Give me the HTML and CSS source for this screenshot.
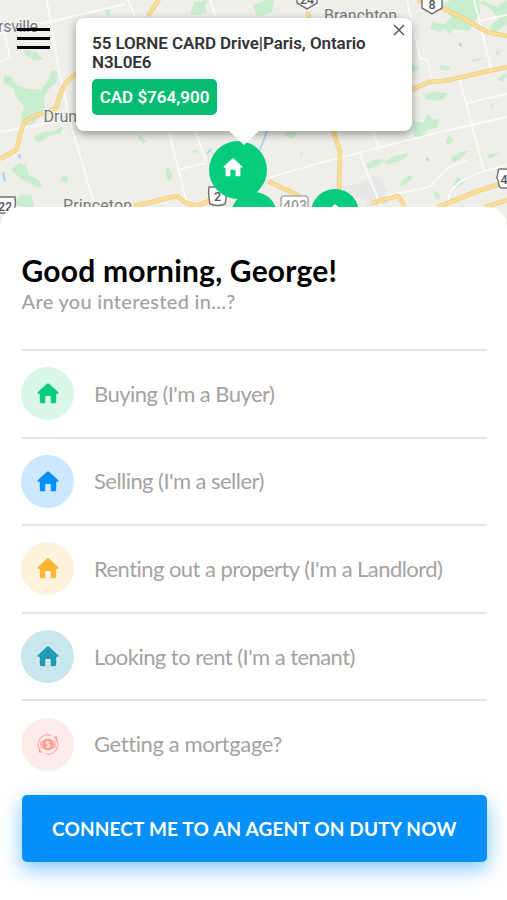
FILE: index.html
```html
<!DOCTYPE html>
<html lang="en">
<head>
<meta charset="utf-8">
<meta name="viewport" content="width=device-width, initial-scale=1">
<title>Property assistant</title>
<link rel="stylesheet" href="styles.css">
</head>
<body>
<svg class="defs" aria-hidden="true">
  <symbol id="house" viewBox="0 0 22 21"><path d="M10 .8a1.500 1.500 0 0 1 2 0l9 8.200c.9.8.5 1.700-.7 1.700h-1.100v8.100c0 .9-.5 1.400-1.400 1.400h-4v-5.800c0-1-.4-1.500-1.300-1.500H9.500c-.9 0-1.300.5-1.300 1.500v5.800H4.200c-.9 0-1.400-.5-1.400-1.400v-8.100H1.700C.5 10.700.1 9.800 1 9Z" fill="currentColor"/></symbol>
</svg>
<main class="screen">
  <header class="map">
    <svg class="map-art" viewBox="0 0 507 228" width="507" height="228">
      <rect width="507" height="228" fill="#efeee9"/>
      <g fill="#c9edcf">
        <path d="M4 75l7 2 7 9 10 3 14 0 6-9 4-10 5 2 0 10-9 8-4 9 1 13-8 7-7 8-9-4 1-9 2-8-7-7-3-10-10-6z"/>
        <path d="M24 50l13 2 6 8-8 0-10-5zM34 137l9-5 11-1 9-4-2 6-11 2-6 5-8 2zM11 170l8-7 7 2 3 10 10 5 3 8-6-2-9-4-9-6zM20 195l11-1 3 11 0 4-13-3-9-2zM60 180l4-5 4 2-1 6zM139 134l8 8-4 1-5-4zM167 166l6 8-4 8-3-6zM190 152l8-3-1 4z"/>
        <path d="M190 15l4-13 14-2-3 6 2 7-10 2zM104 10l7-4-2 12zM253 5l12-5 9 0-2 12-15 5zM440 5l11-5 28 0 1 13-11 18-15-2-5 5-5-8 7-9-7-7zM346 19l8 1 8 9-6 4-8-6zM482 0l15 7 10-7 0 24-15 11-2-9 8-7-7-10-11-6zM432 22l17 3-9 7-10-3z"/>
        <path d="M412 65l9 2-6 5-5-3zM440 65l10 1-2 5-8-2zM468 61l17-4-7 4zM495 52l7-2-5 5zM425 95l8-3 15 1-4 6-8 2-10-2zM413 120l10 3 5-9 4 5 8 1-4 8-9 2-5 7-8 0zM446 140l4-5 4 6-7 4zM497 80l10-8-4 10zM490 106l4-4-1 7zM451 158l7-5 12-3-8 7-8 6zM366 164l10-5 10 1-8 6-10 3zM386 161l7-5 16-3-4 6-12 4-8 1zM402 180l8-5 3 3-8 7-6 1zM452 185l6-8 7 5-7 5zM433 191l8 3-2 6-5-3zM300 155l3-5-1 8zM285 132l12 0-4 7-8-3zM487 155l13-3-10 7z"/>
      </g>
      <g fill="#e7e7e7"><path d="M343 187l20-5 12-7 13 16-20 9-21-4zM367 192l18-3 3 14-23 4z"/></g>
      <g fill="none" stroke="#fbfaf8" stroke-width="1.8">
        <path d="M0 33l70-16 56-13M47 0l11 65 13 60 24 82M0 62l10-4-6-29M0 132l54-10M128 0l7 17M210 0l28 80M169 132l19 75M195 130l11 31M181 169l25-6M268 178l55-16 122-31 62-14M373 131l6 18M360 154l21 53M407 0l13 58 8 2 3 18M460 80l24 91M474 0l18 72M478 21l29-6M467 103l40-9M386 196l44-9M448 204l2-13 10-9 18-9 29-8M430 187l19-20 18-7"/>
      </g>
      <g fill="none" stroke="#edcf8b" stroke-width="4.6" stroke-linejoin="round">
        <path d="M0 159l16-9 7-25q3-8 22-12l11-5 4-13q6-17 18-22M148 16l13-20M134 206l43-10 9 7 10 3 16-6M308 12l3 18M333 130l7 22-1 39M268 181l25 12 15 8M371 203l27-7 7 10M411 90l18-8 15-1 63-14M418 0l26 9 19 9 24 14 20 4M438 207l40-16 29-9M485 207l22-7"/>
      </g>
      <g fill="none" stroke="#fadf93" stroke-width="3" stroke-linejoin="round">
        <path d="M0 159l16-9 7-25q3-8 22-12l11-5 4-13q6-17 18-22M148 16l13-20M134 206l43-10 9 7 10 3 16-6M308 12l3 18M333 130l7 22-1 39M268 181l25 12 15 8M371 203l27-7 7 10M411 90l18-8 15-1 63-14M418 0l26 9 19 9 24 14 20 4M438 207l40-16 29-9M485 207l22-7"/>
      </g>
      <path d="M267 131l-7 19M3 172l2 10M19 154l1 5M460 43l1 4M427 158l1 3M207 154l4-5" fill="none" stroke="#a9d5f2" stroke-width="2"/>
      <g class="place">
        <text x="-2" y="32" textLength="40">rsville</text>
        <text x="43.500" y="122">Drumbo</text>
        <text x="63" y="211" textLength="69">Princeton</text>
        <text x="324" y="21" textLength="73">Branchton</text>
      </g>
      <g fill="#fff" stroke="#77777b" stroke-width="1.500">
        <path d="M209 187h17q1 9-1 17-7 3-15 0-2-9-1-17zM-5 197h20q1 8-1 16H-5zM297-8h20v11l-10 6-10-6zM422-5h20v13l-10 6-10-6zM507 169h-7q-2 0-2 3l-1 6q2 4 2 8l2 2h6"/>
        <rect x="281" y="196" width="27" height="18" rx="3" stroke="#aaa"/>
      </g>
      <g class="route">
        <text x="217.500" y="201">2</text><text x="5" y="211">22</text><text x="307" y="4">24</text><text x="432" y="9">8</text><text x="504" y="184">4</text><text x="295" y="211" class="soft">403</text>
      </g>
      <g fill="#06cc7d"><circle cx="238" cy="170" r="29"/><circle cx="254" cy="215" r="23"/><circle cx="335" cy="213" r="24"/></g>
      <g color="#fff"><use href="#house" x="223" y="158" width="20" height="19"/><use href="#house" x="325" y="204" width="20" height="19"/></g>
    </svg>
    <button class="menu" aria-label="Menu"><span></span><span></span><span></span></button>
    <section class="popup">
      <h2>55 LORNE CARD Drive|Paris, Ontario<br>N3L0E6</h2>
      <span class="price">CAD $764,900</span>
      <button class="close" aria-label="Close"><svg width="12" height="12" viewBox="0 0 12 12"><path d="M1 1l10 10M11 1L1 11" stroke="#555" stroke-width="1.500"/></svg></button>
    </section>
  </header>
  <section class="panel">
    <h1>Good morning, George!</h1>
    <p class="question">Are you interested in...?</p>
    <ul class="options">
      <li class="green"><span class="badge"><svg><use href="#house"/></svg></span><span class="label">Buying (I'm a Buyer)</span></li>
      <li class="blue"><span class="badge"><svg><use href="#house"/></svg></span><span class="label">Selling (I'm a seller)</span></li>
      <li class="amber"><span class="badge"><svg><use href="#house"/></svg></span><span class="label">Renting out a property (I'm a Landlord)</span></li>
      <li class="teal"><span class="badge"><svg><use href="#house"/></svg></span><span class="label">Looking to rent (I'm a tenant)</span></li>
      <li class="coral"><span class="badge"><svg viewBox="0 0 22 22"><circle cx="11" cy="11" r="6.300" fill="currentColor"/><path d="M2.900 17.200A10 10 0 0 1 14.500 1.700M19.100 4.800A10 10 0 0 1 7.500 20.300M4.900 15.500a7.800 7.800 0 0 1 0-9M17.100 6.500a7.800 7.800 0 0 1 0 9" fill="none" stroke="currentColor" stroke-width="1.100"/><path d="M16.500 2.500h4v4zM5.500 19.500h-4v-4z" fill="currentColor"/><path d="M13 8.800c-1-1-3.900-1-3.900.7 0 1.800 4 .9 4 2.900 0 1.700-3.100 1.700-4.200.6M11 7v8" fill="none" stroke="#ffebe9" stroke-width="1.100"/></svg></span><span class="label mortgage">Getting a mortgage?</span></li>
    </ul>
    <button class="connect">CONNECT ME TO AN AGENT ON DUTY NOW</button>
  </section>
</main>
</body>
</html>
```

FILE: styles.css
```css
* { box-sizing: border-box; }
body { margin: 0; font-family: Lato, "Liberation Sans", sans-serif; background: #fff; }
button { border: 0; padding: 0; background: none; }
.defs { position: absolute; width: 0; height: 0; }
.screen { width: 507px; height: 900px; overflow: hidden; }
.map { position: relative; height: 207px; }
.map-art { position: absolute; left: 0; top: 0; }
.place { font: 400 16px Roboto, sans-serif; fill: #77777b; stroke: #f5f4f1; stroke-width: 2px; paint-order: stroke; }
.route { font: 500 12.500px Roboto, sans-serif; fill: #55555a; text-anchor: middle; }
.route .soft { fill: #999; font-size: 14px; }
.menu { position: absolute; left: 17px; top: 28px; width: 33px; display: grid; gap: 5.500px; }
.menu span { height: 3.300px; background: #000; }
.popup { position: absolute; left: 76px; top: 18px; width: 336px; height: 113px; padding: 16px; border-radius: 8px; background: #fff; box-shadow: 0 3px 8px rgb(0 0 0 / .38); font-family: Roboto, sans-serif; }
.popup::after { content: ""; position: absolute; left: 152px; top: 112px; border: 16px solid transparent; border-top: 15px solid #fff; border-bottom: 0; }
.popup h2 { margin: 0; color: #333336; font-size: 17px; line-height: 19px; font-weight: 600; letter-spacing: -.08px; white-space: nowrap; }
.price { display: flex; align-items: center; justify-content: center; width: 125px; height: 36px; margin-top: 7px; border-radius: 5px; background: #04bd70; color: #fff; font-size: 17px; font-weight: 600; }
.close { position: absolute; right: 7px; top: 6px; width: 12px; height: 12px; }
.close svg { display: block; }
.panel { position: relative; height: 693px; padding: 46px 20px 0 21.500px; border-radius: 20px 20px 0 0; background: #fff; }
h1 { margin: 0; color: #000; font-size: 30px; line-height: 34px; font-weight: 700; letter-spacing: .2px; white-space: nowrap; }
.question { margin: 1px 0 0; color: #a3a1a2; font-size: 20px; line-height: 26px; font-weight: 500; letter-spacing: .3px; white-space: nowrap; }
.options { margin: 35px 0 0; padding: 0; list-style: none; }
.options li { display: flex; align-items: center; gap: 20px; height: 87.600px; border-top: 2px solid #e5e5e5; }
.badge { display: grid; place-items: center; width: 53px; height: 53px; margin-left: -.5px; border-radius: 50%; }
.badge svg { width: 22px; height: 21px; }
.green .badge { background: #d9f8e9; color: #05cc7e; }
.blue .badge { background: #cce8ff; color: #0590f8; }
.amber .badge { background: #fff3dc; color: #ffb533; }
.teal .badge { background: #c9e7ec; color: #229ab3; }
.coral .badge { background: #ffebe9; color: #ff9c95; }
.label { color: #a5a2a1; font-size: 22px; line-height: 28px; letter-spacing: -.55px; white-space: nowrap; }
.mortgage { letter-spacing: -.4px; }
.connect { display: block; width: 465.500px; height: 67px; margin-top: 8px; border-radius: 5px; background: #0490f8; color: #fff; box-shadow: 0 7px 20px rgb(4 144 248 / .5); font: 700 19px Lato, sans-serif; letter-spacing: .18px; white-space: nowrap; }
```
